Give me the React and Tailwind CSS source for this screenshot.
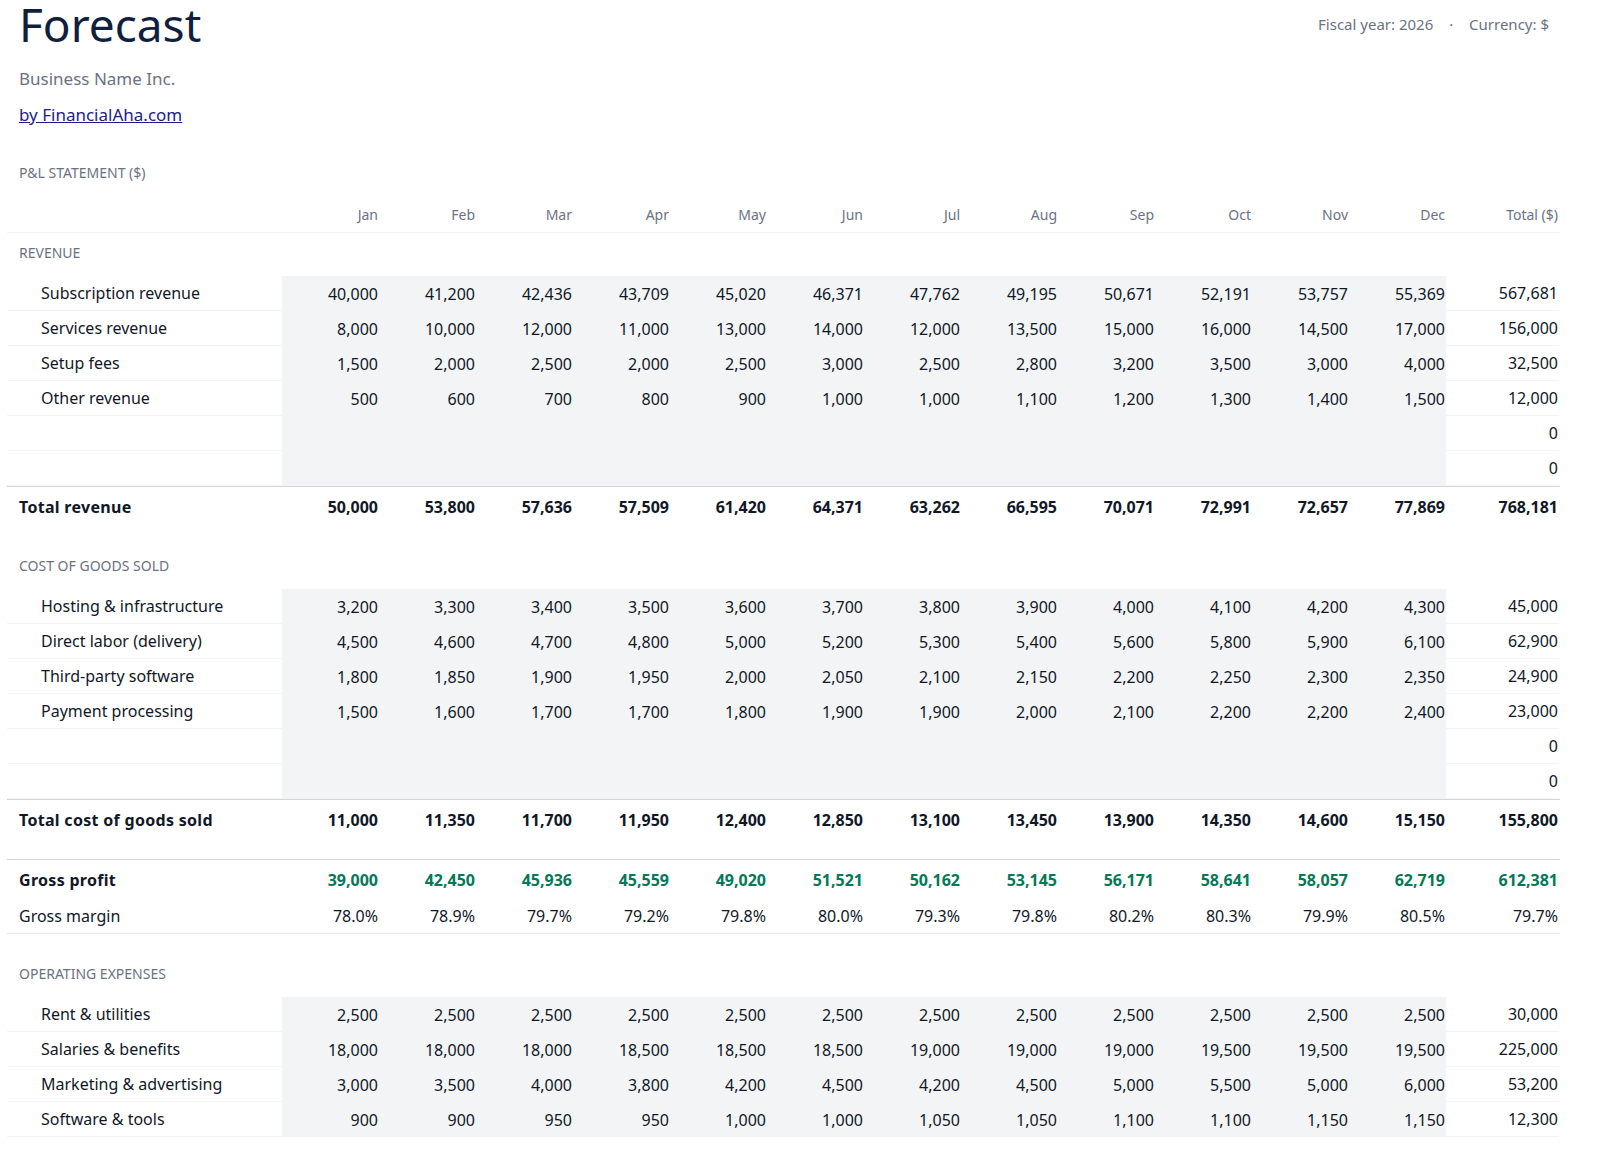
const months = ["Jan","Feb","Mar","Apr","May","Jun","Jul","Aug","Sep","Oct","Nov","Dec"];
const rev = [
  ["Subscription revenue",["40,000","41,200","42,436","43,709","45,020","46,371","47,762","49,195","50,671","52,191","53,757","55,369"],"567,681"],
  ["Services revenue",["8,000","10,000","12,000","11,000","13,000","14,000","12,000","13,500","15,000","16,000","14,500","17,000"],"156,000"],
  ["Setup fees",["1,500","2,000","2,500","2,000","2,500","3,000","2,500","2,800","3,200","3,500","3,000","4,000"],"32,500"],
  ["Other revenue",["500","600","700","800","900","1,000","1,000","1,100","1,200","1,300","1,400","1,500"],"12,000"],
  ["",Array(12).fill(""),"0"],
  ["",Array(12).fill(""),"0"],
];
const cogs = [
  ["Hosting & infrastructure",["3,200","3,300","3,400","3,500","3,600","3,700","3,800","3,900","4,000","4,100","4,200","4,300"],"45,000"],
  ["Direct labor (delivery)",["4,500","4,600","4,700","4,800","5,000","5,200","5,300","5,400","5,600","5,800","5,900","6,100"],"62,900"],
  ["Third-party software",["1,800","1,850","1,900","1,950","2,000","2,050","2,100","2,150","2,200","2,250","2,300","2,350"],"24,900"],
  ["Payment processing",["1,500","1,600","1,700","1,700","1,800","1,900","1,900","2,000","2,100","2,200","2,200","2,400"],"23,000"],
  ["",Array(12).fill(""),"0"],
  ["",Array(12).fill(""),"0"],
];
const opex = [
  ["Rent & utilities",Array(12).fill("2,500"),"30,000"],
  ["Salaries & benefits",["18,000","18,000","18,000","18,500","18,500","18,500","19,000","19,000","19,000","19,500","19,500","19,500"],"225,000"],
  ["Marketing & advertising",["3,000","3,500","4,000","3,800","4,200","4,500","4,200","4,500","5,000","5,500","5,000","6,000"],"53,200"],
  ["Software & tools",["900","900","950","950","1,000","1,000","1,050","1,050","1,100","1,100","1,150","1,150"],"12,300"],
];
const G = "grid grid-cols-[275px_repeat(12,97px)_113px]";

function Section({ title }) {
  return <div className={`${G} h-[63px] items-end`}><div className="pl-3 pb-[13px] text-[14px] text-gray-500">{title}</div></div>;
}
function Rows({ rows }) {
  return rows.map(([l, v, t], i) => (
    <div key={i} className={`${G} h-[35px] items-center`}>
      <div className="h-full flex items-center pl-[34px] text-[16px] text-gray-900 border-b border-gray-100">{l}</div>
      {v.map((x, j) => <div key={j} className="h-full bg-[#f3f4f6] flex items-center justify-end pr-[1px] text-[16px] text-gray-900">{x}</div>)}
      <div className="h-full flex items-center justify-end pr-[1px] text-[16px] text-gray-900 border-b border-gray-100">{t}</div>
    </div>
  ));
}
function Total({ label, v, t, cls = "text-gray-900" }) {
  return (
    <div className={`${G} h-10 items-center font-bold text-[16px] border-t border-gray-300`}>
      <div className="pl-3 text-gray-900 tracking-[0.3px]">{label}</div>
      {v.map((x, j) => <div key={j} className={`text-right pr-[1px] ${cls}`}>{x}</div>)}
      <div className={`text-right pr-[1px] ${cls}`}>{t}</div>
    </div>
  );
}

export default function App() {
  return (
    <div className="w-[1600px] h-[1167px] overflow-hidden bg-white font-['Liberation_Sans'] px-[7px]">
      <div className="flex justify-between">
        <div className="pl-3">
          <h1 className="text-[46px] leading-[48px] text-[#0f1f3d]">Forecast</h1>
          <div className="mt-[18px] text-[17px] text-gray-500">Business Name Inc.</div>
          <a className="block mt-[10px] text-[17px] text-[#1c1c8c] underline">by FinancialAha.com</a>
          <div className="mt-[35px] text-[14px] text-gray-500">P&amp;L STATEMENT ($)</div>
        </div>
        <div className="pt-[13px] pr-[44px] text-[15px] text-gray-500">Fiscal year: 2026 <span className="mx-3">·</span> Currency: $</div>
      </div>
      <div className="mt-[14px] w-[1553px]">
        <div className={`${G} h-[36px] items-center border-b border-gray-100 text-[14px] text-gray-500`}>
          <div />
          {months.map(m => <div key={m} className="text-right pr-[1px]">{m}</div>)}
          <div className="text-right pr-[1px]">Total ($)</div>
        </div>
        <div className={`${G} h-[43px] items-end`}><div className="pl-3 pb-[13px] text-[14px] text-gray-500">REVENUE</div></div>
        <Rows rows={rev} />
        <Total label="Total revenue" v={["50,000","53,800","57,636","57,509","61,420","64,371","63,262","66,595","70,071","72,991","72,657","77,869"]} t="768,181" />
        <Section title="COST OF GOODS SOLD" />
        <Rows rows={cogs} />
        <Total label="Total cost of goods sold" v={["11,000","11,350","11,700","11,950","12,400","12,850","13,100","13,450","13,900","14,350","14,600","15,150"]} t="155,800" />
        <div className="h-5" />
        <Total label="Gross profit" cls="text-[#047857]" v={["39,000","42,450","45,936","45,559","49,020","51,521","50,162","53,145","56,171","58,641","58,057","62,719"]} t="612,381" />
        <div className={`${G} h-[35px] items-center border-b border-gray-200 text-[16px] text-gray-900`}>
          <div className="pl-3">Gross margin</div>
          {["78.0%","78.9%","79.7%","79.2%","79.8%","80.0%","79.3%","79.8%","80.2%","80.3%","79.9%","80.5%"].map((x, j) => <div key={j} className="text-right pr-[1px]">{x}</div>)}
          <div className="text-right pr-[1px]">79.7%</div>
        </div>
        <Section title="OPERATING EXPENSES" />
        <Rows rows={opex} />
      </div>
    </div>
  );
}
